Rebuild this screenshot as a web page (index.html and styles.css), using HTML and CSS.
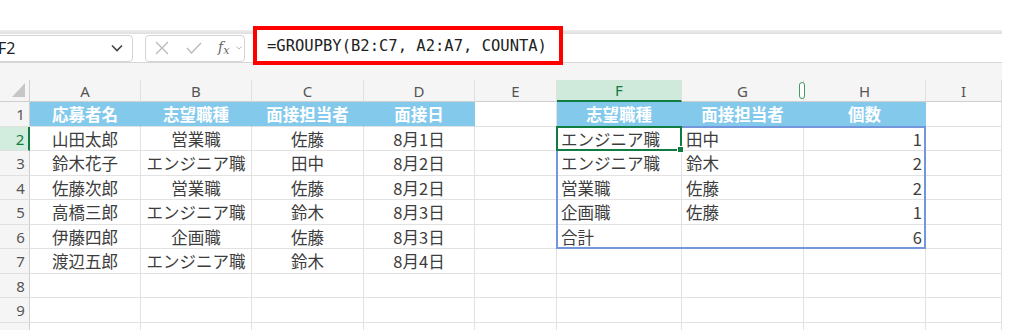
FILE: index.html
```html
<!DOCTYPE html>
<html>
<head>
  <meta charset="UTF-8">
  <title>GROUPBY</title>
  <link rel="stylesheet" href="styles.css">
</head>
<body>
  <div class="app">
    <div class="ribbon-edge"></div>
    <div class="shade"></div>
    <div class="formula-bar">
      <div class="name-box">
        <span>F2</span>
        <svg class="chev" width="12" height="8" viewBox="0 0 12 8"><polyline points="1,1.5 6,6.5 11,1.5" fill="none" stroke="#444" stroke-width="1.6"/></svg>
      </div>
      <div class="fx-box">
        <svg width="14" height="14" viewBox="0 0 14 14"><path d="M1 1 L13 13 M13 1 L1 13" stroke="#b9b9b9" stroke-width="1.3" fill="none"/></svg>
        <svg width="16" height="12" viewBox="0 0 16 12"><polyline points="1,6 5.5,11 15,1" stroke="#b9b9b9" stroke-width="1.3" fill="none"/></svg>
        <span class="fx">f<sub>x</sub></span>
        <svg width="6" height="4" viewBox="0 0 6 4"><polyline points="0.5,0.5 3,3.2 5.5,0.5" stroke="#b9b9b9" stroke-width="1" fill="none"/></svg>
      </div>
      <div class="formula">=GROUPBY(B2:C7, A2:A7, COUNTA)</div>
    </div>
    <div class="gap"></div>

    <div class="sheet">
      <div class="hd corner"><span class="tri"></span></div>
      <div class="hd">A</div>
      <div class="hd">B</div>
      <div class="hd">C</div>
      <div class="hd">D</div>
      <div class="hd">E</div>
      <div class="hd sel">F</div>
      <div class="hd">G<span class="grip"></span></div>
      <div class="hd">H</div>
      <div class="hd">I</div>

      <div class="rh">1</div>
      <div class="c th">応募者名</div>
      <div class="c th">志望職種</div>
      <div class="c th">面接担当者</div>
      <div class="c th">面接日</div>
      <div class="c"></div>
      <div class="c th">志望職種</div>
      <div class="c th">面接担当者</div>
      <div class="c th">個数</div>
      <div class="c"></div>

      <div class="rh sel">2</div>
      <div class="c ctr">山田太郎</div>
      <div class="c ctr">営業職</div>
      <div class="c ctr">佐藤</div>
      <div class="c ctr">8月1日</div>
      <div class="c"></div>
      <div class="c">エンジニア職</div>
      <div class="c">田中</div>
      <div class="c num">1</div>
      <div class="c"></div>

      <div class="rh">3</div>
      <div class="c ctr">鈴木花子</div>
      <div class="c ctr">エンジニア職</div>
      <div class="c ctr">田中</div>
      <div class="c ctr">8月2日</div>
      <div class="c"></div>
      <div class="c">エンジニア職</div>
      <div class="c">鈴木</div>
      <div class="c num">2</div>
      <div class="c"></div>

      <div class="rh">4</div>
      <div class="c ctr">佐藤次郎</div>
      <div class="c ctr">営業職</div>
      <div class="c ctr">佐藤</div>
      <div class="c ctr">8月2日</div>
      <div class="c"></div>
      <div class="c">営業職</div>
      <div class="c">佐藤</div>
      <div class="c num">2</div>
      <div class="c"></div>

      <div class="rh">5</div>
      <div class="c ctr">高橋三郎</div>
      <div class="c ctr">エンジニア職</div>
      <div class="c ctr">鈴木</div>
      <div class="c ctr">8月3日</div>
      <div class="c"></div>
      <div class="c">企画職</div>
      <div class="c">佐藤</div>
      <div class="c num">1</div>
      <div class="c"></div>

      <div class="rh">6</div>
      <div class="c ctr">伊藤四郎</div>
      <div class="c ctr">企画職</div>
      <div class="c ctr">佐藤</div>
      <div class="c ctr">8月3日</div>
      <div class="c"></div>
      <div class="c">合計</div>
      <div class="c"></div>
      <div class="c num">6</div>
      <div class="c"></div>

      <div class="rh">7</div>
      <div class="c ctr">渡辺五郎</div>
      <div class="c ctr">エンジニア職</div>
      <div class="c ctr">鈴木</div>
      <div class="c ctr">8月4日</div>
      <div class="c"></div>
      <div class="c"></div>
      <div class="c"></div>
      <div class="c"></div>
      <div class="c"></div>

      <div class="rh">8</div>
      <div class="c"></div><div class="c"></div><div class="c"></div><div class="c"></div><div class="c"></div>
      <div class="c"></div><div class="c"></div><div class="c"></div><div class="c"></div>

      <div class="rh">9</div>
      <div class="c"></div><div class="c"></div><div class="c"></div><div class="c"></div><div class="c"></div>
      <div class="c"></div><div class="c"></div><div class="c"></div><div class="c"></div>

      <div class="rh">10</div>
      <div class="c"></div><div class="c"></div><div class="c"></div><div class="c"></div><div class="c"></div>
      <div class="c"></div><div class="c"></div><div class="c"></div><div class="c"></div>

      <!-- spill range and active cell -->
      <div class="spill"></div>
      <div class="active"></div>
    </div>
  </div>
</body>
</html>
```

FILE: styles.css
```css
body {
  margin: 0;
  background-color: #fff;
  font-family: "Noto Sans CJK JP", sans-serif;
  overflow: hidden;
}

.app {
  width: 1002px;
}

.ribbon-edge {
  height: 30px;
  background-color: #fff;
}

.shade {
  height: 4px;
  background: linear-gradient(#eeeeee, #dedede);
}

/* formula bar */
.formula-bar {
  display: flex;
  align-items: center;
  height: 28px;
  border-bottom: 1px solid #d6d6d6;
  background-color: #fff;
}

.name-box {
  display: flex;
  align-items: center;
  justify-content: space-between;
  box-sizing: border-box;
  width: 143px;
  height: 27px;
  margin-left: -10px;
  padding: 0 9px 0 7px;
  border: 1px solid #d4d4d4;
  border-radius: 4px;
  font-family: "Noto Sans", sans-serif;
  font-size: 16px;
  color: #222;
}

.fx-box {
  display: flex;
  align-items: center;
  box-sizing: border-box;
  width: 100px;
  height: 27px;
  margin-left: 12px;
  padding-left: 9px;
  border: 1px solid #d4d4d4;
  border-radius: 4px;
}

.fx-box svg:nth-child(2) {
  margin-left: 17px;
}

.fx {
  margin-left: 16px;
  margin-right: 7px;
  font-family: "DejaVu Serif", serif;
  font-style: italic;
  font-size: 14px;
  color: #666;
}

.fx sub {
  font-size: 11px;
  vertical-align: -2px;
}

.formula {
  position: relative;
  z-index: 2;
  align-self: flex-start;
  box-sizing: border-box;
  width: 310px;
  height: 39px;
  margin-top: -8px;
  margin-left: 8px;
  padding: 7px 0 0 10px;
  border: 4px solid #ff0000;
  background-color: #fff;
  font-family: "DejaVu Sans Mono", monospace;
  font-size: 15.5px;
  color: #222;
}

.gap {
  height: 17px;
  background-color: #f5f5f5;
}

/* grid */
.sheet {
  position: relative;
  display: grid;
  grid-template-columns: 30px 111px 111px 112px 111px 82px 125px 122px 122px 76px;
  grid-template-rows: 22px 25px 24px 25px 24px 25px 24px 25px 24px 25px 24px;
  background-color: #fff;
}

.hd {
  position: relative;
  display: flex;
  align-items: center;
  justify-content: center;
  box-sizing: border-box;
  background-color: #f5f5f5;
  border-right: 1px solid #e0e0e0;
  border-bottom: 1px solid #cfcfcf;
  font-family: "Noto Sans", sans-serif;
  font-size: 15px;
  color: #555;
}

.hd.sel {
  background-color: #cfeadb;
  border-bottom: 2px solid #107c41;
  color: #107c41;
}

.corner {
  border-right: 1px solid #cfcfcf;
}

.tri {
  position: absolute;
  right: 4px;
  bottom: 4px;
  width: 0;
  height: 0;
  border-left: 13px solid transparent;
  border-bottom: 14px solid #c6c6c6;
}

.grip {
  position: absolute;
  right: -2px;
  top: 2px;
  box-sizing: border-box;
  width: 6px;
  height: 17px;
  border: 1.5px solid #3f9a63;
  border-radius: 3px;
  background-color: #fff;
  z-index: 1;
}

.rh {
  display: flex;
  align-items: center;
  justify-content: center;
  box-sizing: border-box;
  padding-left: 12px;
  background-color: #f5f5f5;
  border-right: 1px solid #cfcfcf;
  border-bottom: 1px solid #e0e0e0;
  font-family: "Noto Sans", sans-serif;
  font-size: 15px;
  color: #555;
}

.rh.sel {
  background-color: #d2ecdd;
  border-right: 2px solid #107c41;
  color: #107c41;
}

.c {
  display: flex;
  align-items: center;
  box-sizing: border-box;
  padding: 0 4px 0 4px;
  border-right: 1px solid #e2e2e2;
  border-bottom: 1px solid #e2e2e2;
  font-size: 16.5px;
  color: #3d3d3d;
  white-space: nowrap;
  overflow: hidden;
}

.c.ctr {
  justify-content: center;
}

.c.num {
  justify-content: flex-end;
  padding-right: 3px;
}

.c.th {
  justify-content: center;
  background-color: #83c9ec;
  border-right-color: #83c9ec;
  font-weight: 600;
  color: #fff;
}

.spill {
  position: absolute;
  grid-row: 3 / 8;
  grid-column: 7 / 10;
  top: -1px;
  left: -1px;
  right: 0;
  bottom: 0;
  border: 2px solid #7497dc;
  pointer-events: none;
}

.active {
  position: absolute;
  grid-row: 3 / 4;
  grid-column: 7 / 8;
  top: -1px;
  left: -1px;
  right: 0;
  bottom: 0;
  border: 2px solid #107c41;
  pointer-events: none;
}

.active::after {
  content: "";
  position: absolute;
  right: -4px;
  bottom: -4px;
  width: 5px;
  height: 5px;
  background-color: #107c41;
  border: 1px solid #fff;
}
```
